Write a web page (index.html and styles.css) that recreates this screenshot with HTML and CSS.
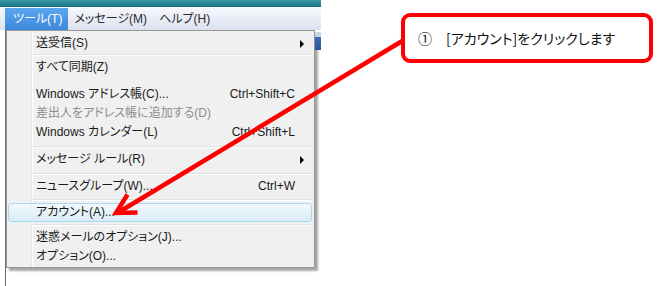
FILE: index.html
```html
<!DOCTYPE html>
<html lang="ja">

<head>
    <meta charset="UTF-8">
    <title>アカウント設定の手順</title>
    <link rel="stylesheet" href="styles.css">
</head>

<body>
    <div class="page">
        <div class="window">
            <div class="titlebar"></div>
            <div class="menubar">
                <span class="mb-item active">ツール(T)</span>
                <span class="mb-item">メッセージ(M)</span>
                <span class="mb-item">ヘルプ(H)</span>
            </div>
            <div class="client">
                <div class="menu">
                    <div class="item sub"><span>送受信(S)</span><span class="arrow"></span></div>
                    <div class="sep s1"></div>
                    <div class="item"><span>すべて同期(Z)</span></div>
                    <div class="item gap"><span>Windows アドレス帳(C)...</span><span>Ctrl+Shift+C</span></div>
                    <div class="item off"><span>差出人をアドレス帳に追加する(D)</span></div>
                    <div class="item"><span>Windows カレンダー(L)</span><span>Ctrl+Shift+L</span></div>
                    <div class="sep s2"></div>
                    <div class="item sub"><span>メッセージ ルール(R)</span><span class="arrow"></span></div>
                    <div class="sep s2"></div>
                    <div class="item"><span>ニュースグループ(W)...</span><span>Ctrl+W</span></div>
                    <div class="sep s3"></div>
                    <div class="item hot"><span>アカウント(A)...</span></div>
                    <div class="sep s4"></div>
                    <div class="item"><span>迷惑メールのオプション(J)...</span></div>
                    <div class="item"><span>オプション(O)...</span></div>
                </div>
                <div class="edge"></div>
            </div>
        </div>

        <div class="callout">①　[アカウント]をクリックします</div>

        <!-- 吹き出しからメニュー項目への矢印 -->
        <svg class="arrow-line" width="660" height="286" viewBox="0 0 660 286">
            <line x1="403" y1="40.5" x2="119" y2="212" stroke="#ff0000" stroke-width="4.5" />
            <polyline points="127.5,194.5 116,213 137.5,212.5" fill="none" stroke="#ff0000" stroke-width="4.5" />
        </svg>
    </div>
</body>

</html>
```

FILE: styles.css
```css
* {
    margin: 0;
    padding: 0;
    box-sizing: border-box;
}

body {
    width: 660px;
    height: 286px;
    overflow: hidden;
    background: #fff;
    font-family: "Liberation Sans", "Noto Sans CJK JP", sans-serif;
    font-size: 12px;
    font-feature-settings: "palt";
    color: #000;
}

.page {
    position: relative;
    display: flex;
    width: 660px;
    height: 286px;
}

.window {
    width: 321px;
    display: flex;
    flex-direction: column;
}

.titlebar {
    height: 7px;
    background: linear-gradient(#3d98a6, #11707f);
}

.menubar {
    margin-top: 1px;
    height: 22px;
    display: flex;
    padding-left: 5px;
    background: linear-gradient(#f6f7fc, #dde1f0);
}

.mb-item {
    padding: 0 6px;
    line-height: 22px;
    color: #2a2a2a;
}

.mb-item.active {
    padding-left: 8px;
    background: linear-gradient(#5ea7ee, #3a88dc);
    color: #fff;
}

.client {
    flex: 1;
    display: flex;
    align-items: flex-start;
    margin-left: 5px;
    border-left: 1px solid #6f6f6f;
}

.menu {
    width: 309px;
    padding: 3px 2px 1px 2px;
    border: 1px solid #979797;
    background: linear-gradient(to right, transparent 24px, #e2e3e3 24px, #e2e3e3 25px, #fff 25px, #fff 26px, transparent 26px), #f0f0f0;
    box-shadow: 3px 3px 2px rgba(0, 0, 0, 0.35);
}

.item {
    display: flex;
    justify-content: space-between;
    align-items: center;
    height: 19px;
    line-height: 19px;
    padding: 0 17px 0 27px;
    white-space: nowrap;
    color: #1a1a1a;
}

.item.sub {
    padding-right: 8px;
}

.item.gap {
    margin-top: 8px;
}

.item.off {
    color: #8d8d8d;
}

.item.hot {
    margin-left: -1px;
    line-height: 17px;
    border: 1px solid #a9d9f1;
    border-radius: 3px;
    background: linear-gradient(#f2f9fd, #d9ecf8);
}

.arrow {
    width: 0;
    height: 0;
    border-top: 4px solid transparent;
    border-bottom: 4px solid transparent;
    border-left: 4px solid #000;
}

.sep {
    height: 2px;
    margin-left: 23px;
    border-top: 1px solid #e0e0e0;
    border-bottom: 1px solid #fff;
}

.sep.s1 {
    margin-top: 1px;
    margin-bottom: 2px;
}

.sep.s2 {
    margin-top: 4px;
    margin-bottom: 2px;
}

.sep.s3 {
    margin-top: 3px;
    margin-bottom: 2px;
}

.sep.s4 {
    margin-top: 2px;
    margin-bottom: 2px;
}

.edge {
    width: 6px;
    height: 18px;
    margin-top: 2px;
    background: linear-gradient(#c9d6e6 0, #c9d6e6 5px, #3d6fb4 5px, #2a5699);
}

.callout {
    width: 252px;
    height: 50px;
    margin: 13px 0 0 80px;
    padding-left: 13px;
    border: 4px solid #ff0000;
    border-radius: 9px;
    font-family: "Noto Sans CJK JP", sans-serif;
    font-size: 14px;
    line-height: 42px;
    color: #111;
}

.arrow-line {
    position: absolute;
    left: 0;
    top: 0;
    pointer-events: none;
}
```
